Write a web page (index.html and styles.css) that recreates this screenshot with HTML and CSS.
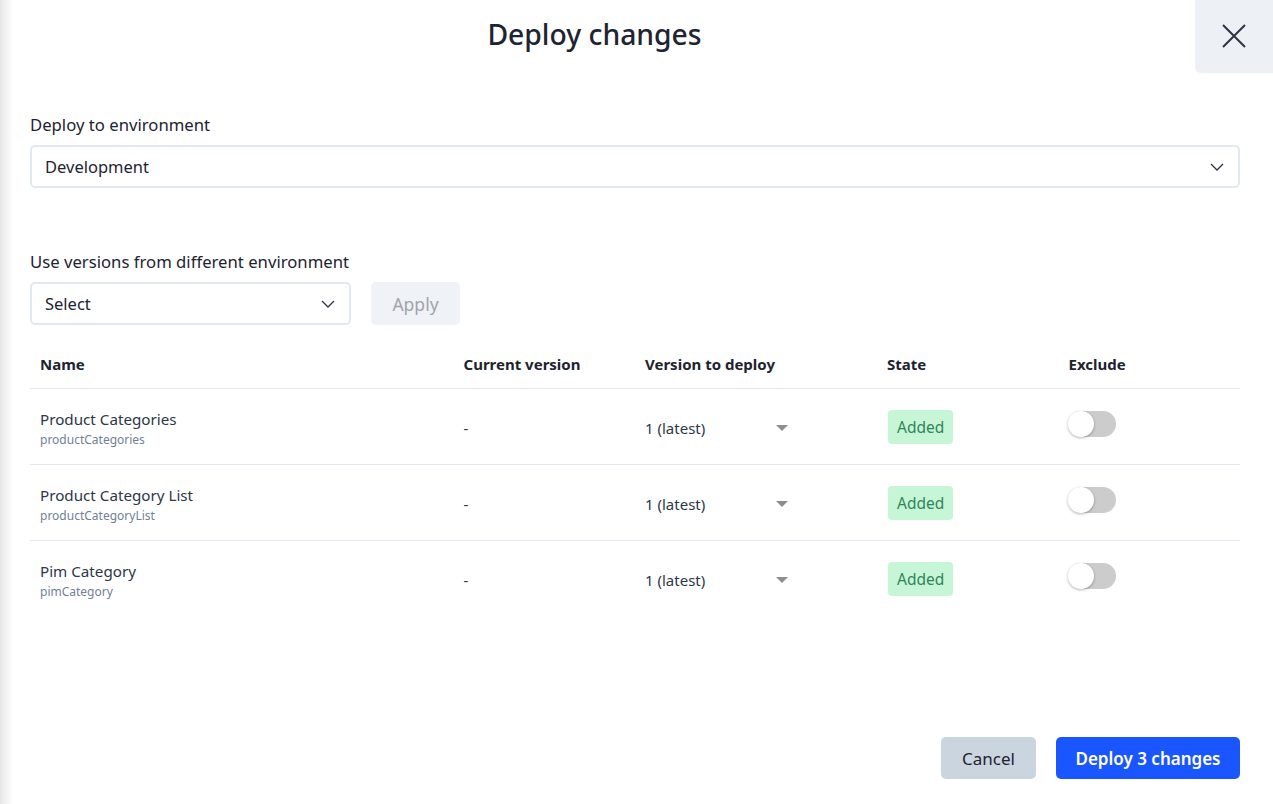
FILE: index.html
```html
<!DOCTYPE html>
<html>
<head>
<meta charset="utf-8">
<link rel="stylesheet" href="styles.css">
</head>
<body>
<div class="drawer">
  <header class="head">
    <h1 class="title">Deploy changes</h1>
    <button class="close" aria-label="Close">
      <svg width="26" height="26" viewBox="0 0 26 26"><path d="M2 2L24 24M24 2L2 24" stroke="#2d3340" stroke-width="2" fill="none"/></svg>
    </button>
  </header>
  <main class="body">
    <section class="field">
      <label class="label">Deploy to environment</label>
      <div class="select wide">
        <span>Development</span>
        <svg width="14" height="8" viewBox="0 0 14 8"><path d="M1 1L7 7L13 1" stroke="#2d3340" stroke-width="1.3" fill="none"/></svg>
      </div>
    </section>
    <section class="field second">
      <label class="label">Use versions from different environment</label>
      <div class="row">
        <div class="select narrow">
          <span>Select</span>
          <svg width="14" height="8" viewBox="0 0 14 8"><path d="M1 1L7 7L13 1" stroke="#2d3340" stroke-width="1.3" fill="none"/></svg>
        </div>
        <button class="apply">Apply</button>
      </div>
    </section>
    <table class="tbl">
      <colgroup><col class="c1"><col class="c2"><col class="c3"><col class="c4"><col class="c5"></colgroup>
      <thead>
        <tr><th>Name</th><th>Current version</th><th>Version to deploy</th><th>State</th><th>Exclude</th></tr>
      </thead>
      <tbody>
        <tr>
          <td class="name"><div class="nm">Product Categories</div><div class="sub">productCategories</div></td>
          <td class="dash">-</td>
          <td><div class="ver"><span>1 (latest)</span><i class="caret"></i></div></td>
          <td class="state"><span class="badge">Added</span></td>
          <td><span class="toggle"><i></i></span></td>
        </tr>
        <tr>
          <td class="name"><div class="nm">Product Category List</div><div class="sub">productCategoryList</div></td>
          <td class="dash">-</td>
          <td><div class="ver"><span>1 (latest)</span><i class="caret"></i></div></td>
          <td class="state"><span class="badge">Added</span></td>
          <td><span class="toggle"><i></i></span></td>
        </tr>
        <tr>
          <td class="name"><div class="nm">Pim Category</div><div class="sub">pimCategory</div></td>
          <td class="dash">-</td>
          <td><div class="ver"><span>1 (latest)</span><i class="caret"></i></div></td>
          <td class="state"><span class="badge">Added</span></td>
          <td><span class="toggle"><i></i></span></td>
        </tr>
      </tbody>
    </table>
  </main>
  <footer class="foot">
    <button class="btn cancel">Cancel</button>
    <button class="btn primary">Deploy 3 changes</button>
  </footer>
</div>
</body>
</html>
```
FILE: styles.css
```css
* { box-sizing: border-box; }
html, body { margin: 0; height: 100%; }
body {
  font-family: "Noto Sans", "Open Sans", sans-serif;
  color: #1e2330;
  background: linear-gradient(to right, #e6e6e6 0, #f6f6f6 8px, #ffffff 14px);
}
.drawer {
  height: 804px;
  display: flex;
  flex-direction: column;
}
.head {
  height: 73px;
  display: flex;
  align-items: stretch;
}
.title {
  flex: 1;
  margin: 0;
  font-size: 28.3px;
  font-weight: 500;
  color: #1e2432;
  text-align: center;
  line-height: 68px;
  padding-right: 6px;
}
.close {
  width: 78px;
  height: 73px;
  border: 0;
  background: #edf1f5;
  border-bottom-left-radius: 6px;
  display: flex;
  align-items: center;
  justify-content: center;
  padding: 0;
  padding-bottom: 2px;
}
.body { flex: 1; padding: 0 33px 0 30px; }
.field { margin-top: 40px; }
.field.second { margin-top: 62px; }
.label {
  display: block;
  font-size: 16.7px;
  line-height: 24px;
  color: #1e2330;
  margin-bottom: 8px;
}
.select {
  height: 43px;
  border: 2px solid #e2e8f0;
  border-radius: 5px;
  display: flex;
  align-items: center;
  justify-content: space-between;
  padding: 0 14px 0 13px;
  font-size: 16.5px;
  color: #1e2330;
}
.select.narrow { width: 321px; }
.row { display: flex; gap: 20px; }
.apply {
  width: 89px;
  height: 43px;
  border: 0;
  border-radius: 5px;
  background: #eff2f6;
  color: #a0a4ab;
  font-family: inherit;
  font-size: 17.5px;
}
.tbl {
  width: 100%;
  border-collapse: collapse;
  table-layout: fixed;
  margin-top: 15px;
}
.c1 { width: 35%; } .c2 { width: 15%; } .c3 { width: 20%; } .c4 { width: 15%; } .c5 { width: 15%; }
.tbl th {
  text-align: left;
  font-size: 15px;
  font-weight: 700;
  color: #1e2330;
  height: 48px;
  padding: 0 10px;
  border-bottom: 1px solid #e2e8f0;
}
.tbl td {
  height: 76px;
  padding: 0 10px;
  font-size: 15px;
  color: #2d3748;
  vertical-align: middle;
}
.tbl tbody tr + tr td { border-top: 1px solid #e2e8f0; }
.tbl td.name { padding-top: 5px; }
.nm { font-size: 15.2px; line-height: 22px; color: #2d3748; }
.sub { font-size: 12px; line-height: 20px; color: #718096; }
.tbl td.dash { padding-top: 4px; }
.tbl td.state { padding-top: 2px; }
.ver {
  display: flex;
  align-items: center;
  justify-content: space-between;
  width: 143px;
  padding-top: 4px;
}
.caret {
  width: 0; height: 0;
  border-left: 6px solid transparent;
  border-right: 6px solid transparent;
  border-top: 6px solid #8e8e8e;
}
.badge {
  display: inline-block;
  background: #c6f6d5;
  color: #2f855a;
  font-size: 15.5px;
  line-height: 34px;
  padding: 0 9px;
  border-radius: 4px;
  margin-left: 1px;
}
.toggle {
  display: inline-block;
  position: relative;
  width: 47px;
  height: 26px;
  border-radius: 13px;
  background: #cccccc;
  vertical-align: middle;
  margin-bottom: 4px;
}
.toggle i {
  position: absolute;
  left: -1px; top: 0;
  width: 26px; height: 26px;
  border-radius: 50%;
  background: #fff;
  box-shadow: 0 1px 3px rgba(0,0,0,0.3);
}
.foot {
  display: flex;
  justify-content: flex-end;
  gap: 20px;
  padding: 0 33px 25px 30px;
}
.btn {
  height: 42px;
  border: 0;
  border-radius: 5px;
  font-family: inherit;
  font-size: 17px;
}
.cancel {
  width: 95px;
  background: #cbd5e0;
  color: #1e2330;
}
.primary {
  width: 184px;
  background: #1a56ff;
  color: #fff;
  font-weight: 600;
}
```
